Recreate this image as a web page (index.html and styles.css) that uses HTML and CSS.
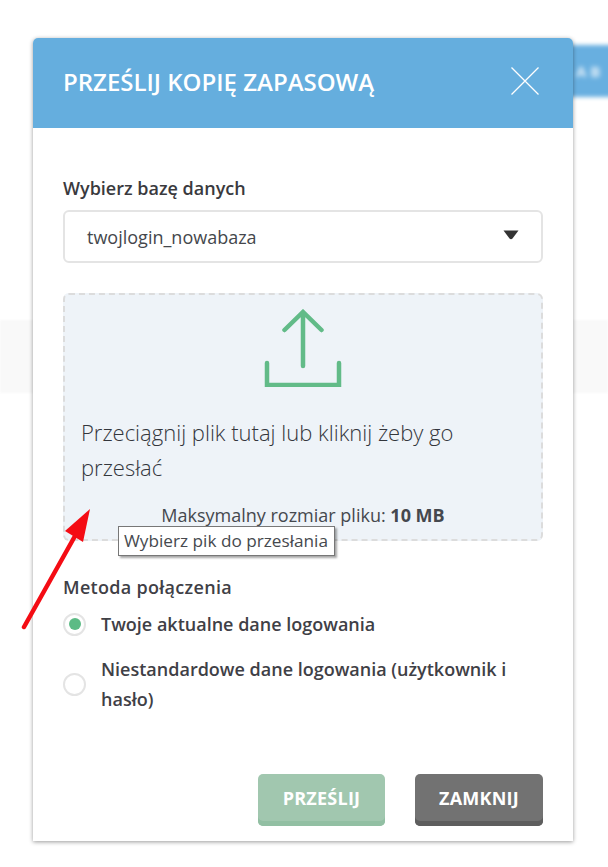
FILE: index.html
```html
<!DOCTYPE html>
<html lang="pl">
<head>
<meta charset="utf-8">
<title>Prześlij kopię zapasową</title>
<link rel="stylesheet" href="styles.css">
</head>
<body>
<div class="bg-band"></div>
<div class="bg-button"><span class="bg-letters">A B</span></div>
<main class="modal">
  <header class="modal-head">
    <h1 class="modal-title">PRZEŚLIJ KOPIĘ ZAPASOWĄ</h1>
    <svg class="close" viewBox="0 0 28 28" width="28" height="28" aria-label="Zamknij"><path d="M0.5 0.5 27.5 27.5M27.5 0.5 0.5 27.5" fill="none" stroke="#fff" stroke-width="1.3"/></svg>
  </header>
  <div class="modal-body">
    <label class="field-label">Wybierz bazę danych</label>
    <div class="select">
      <span>twojlogin_nowabaza</span>
      <svg class="caret" viewBox="0 0 16 10" width="16" height="10"><path d="M0.5 0.5H15.5L9.5 8.6Q8 10 6.5 8.6Z" fill="#333"/></svg>
    </div>
    <div class="drop">
      <svg class="upload" viewBox="0 0 78 78" width="78" height="78"><path d="M39 3V57M20.5 21 39 3 57.5 21M3 54V76H75V54" fill="none" stroke="#62bb88" stroke-width="4.5" stroke-linecap="round"/></svg>
      <p class="drop-text">Przeciągnij plik tutaj lub kliknij żeby go przesłać</p>
      <p class="drop-limit">Maksymalny rozmiar pliku: <b>10 MB</b></p>
      <div class="tooltip">Wybierz pik do przesłania</div>
    </div>
    <div class="method-label">Metoda połączenia</div>
    <div class="radio-row first">
      <span class="radio on"></span>
      <span class="radio-text">Twoje aktualne dane logowania</span>
    </div>
    <div class="radio-row second">
      <span class="radio"></span>
      <span class="radio-text">Niestandardowe dane logowania (użytkownik i hasło)</span>
    </div>
    <div class="actions">
      <button class="btn btn-send">PRZEŚLIJ</button>
      <button class="btn btn-close">ZAMKNIJ</button>
    </div>
  </div>
</main>
<svg class="arrow" viewBox="0 0 80 130" width="80" height="130"><path d="M3 127 54 36" fill="none" stroke="#f40c14" stroke-width="4.5" stroke-linecap="round"/><path d="M69 9 44 31 62 42Z" fill="#f40c14"/></svg>
</body>
</html>
```
FILE: styles.css
```css
* { box-sizing: border-box; }
html, body { margin: 0; height: 867px; overflow: hidden; background: #fff; }
body {
  position: relative;
  font-family: "Open Sans", "Noto Sans", sans-serif;
  color: #3a3d42;
}
.bg-band { position: absolute; left: 0; right: 0; top: 320px; height: 73px; background: #f9f9f9; filter: blur(1px); }
.bg-button {
  position: absolute; left: 560px; top: 45px; width: 60px; height: 52px;
  background: #68afe0; filter: blur(2px); color: #e4f0f9;
  font-size: 15px; font-weight: 700; padding: 16px 0 0 16px; white-space: nowrap;
}
.bg-letters { filter: blur(1px); }
.modal {
  position: absolute; left: 33px; top: 38px; width: 540px; height: 803px;
  background: #fff; border-radius: 5px 5px 0 0;
  box-shadow: 0 1px 4px rgba(0,0,0,.4);
}
.modal-head {
  height: 90px; background: #65aede; border-radius: 5px 5px 0 0;
  display: flex; align-items: center; justify-content: space-between;
  padding: 0 34px 0 30px;
}
.modal-title { margin: 0; color: #fff; font-size: 24px; font-weight: 600; line-height: 32px; position: relative; top: -1px; }
.close { display: block; margin-top: -4px; }
.modal-body { padding: 48px 30px 0; }
.field-label { display: block; font-size: 18px; font-weight: 600; line-height: 24px; color: #3a3a3e; }
.select {
  margin-top: 10px; height: 53px; border: 2px solid #e4e4e4; border-radius: 6px;
  display: flex; align-items: center; justify-content: space-between;
  padding: 0 22px 0 22px; font-size: 18px; color: #44474c;
}
.caret { display: block; margin-top: -3px; }
.drop {
  position: relative; margin-top: 30px; height: 248px;
  background: #eef3f8; border: 2px dashed #dcdcdc; border-radius: 6px;
  padding: 14px 16px 0;
}
.upload { display: block; margin: 0 auto; }
.drop-text { margin: 28px 0 0; font-size: 22px; font-weight: 300; line-height: 35px; color: #33363c; }
.drop-limit { margin: 18px 0 0; text-align: center; font-size: 18px; font-weight: 400; line-height: 24px; color: #45484e; }
.drop-limit b { font-weight: 700; }
.tooltip {
  position: absolute; left: 53px; top: 231px; width: 217px; height: 30px;
  background: #fff; border: 1px solid #777; box-shadow: 2px 2px 2px rgba(0,0,0,.35);
  font-size: 17.2px; line-height: 28px; padding-left: 5px; color: #46494e; white-space: nowrap;
}
.method-label { margin-top: 34px; font-size: 18px; font-weight: 600; letter-spacing: 0.3px; line-height: 24px; color: #3f4046; }
.radio-row { display: flex; align-items: center; gap: 15px; font-size: 18px; font-weight: 600; color: #3f4046; }
.radio-row.first { margin-top: 11px; height: 28px; }
.radio-row.second { margin-top: 16px; height: 60px; }
.radio-text { line-height: 30px; flex: 1; }
.radio {
  flex: none; width: 23px; height: 23px; border-radius: 50%; background: #fff; border: 2px solid #e4e4e4;
  display: flex; align-items: center; justify-content: center;
}
.radio.on::after { content: ""; width: 12px; height: 12px; border-radius: 50%; background: #5cbb85; }
.actions { margin-top: 60px; display: flex; justify-content: flex-end; gap: 30px; }
.btn {
  height: 52px; border: 0; border-radius: 5px; color: #fff;
  font-family: inherit; font-size: 18px; font-weight: 700; letter-spacing: 0.25px; padding: 0 0 4px;
}
.btn-send { width: 127px; background: #a1c7af; box-shadow: inset 0 -5px 0 #92bfa3; }
.btn-close { width: 128px; background: #727272; box-shadow: inset 0 -5px 0 #5e5e5e; }
.arrow { position: absolute; left: 21px; top: 500px; }
```
